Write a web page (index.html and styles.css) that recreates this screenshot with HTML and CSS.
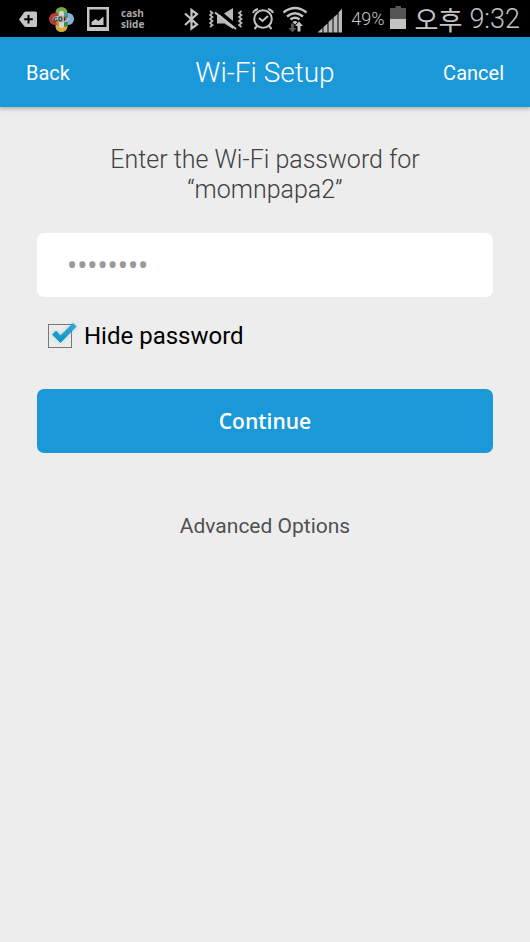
FILE: index.html
```html
<!DOCTYPE html>
<html lang="en">
<head>
<meta charset="utf-8">
<meta name="viewport" content="width=device-width, initial-scale=1">
<title>Wi-Fi Setup</title>
<link rel="stylesheet" href="styles.css">
</head>
<body>
<div class="status">
  <div class="status-group status-left">
    <svg width="18" height="37" viewBox="19 0 18 37" aria-hidden="true"><path fill="#c4c4c4" d="M19 19.500L24 12.500Q24.800 11.500 26 11.500H35.500Q37 11.500 37 13V25.500Q37 27 35.500 27H26Q24.800 27 24 26Z"/><path stroke="#000" stroke-width="2" d="M28.500 15v8.500M24.300 19.300h8.500"/></svg>
    <svg width="26" height="37" viewBox="51 0 26 37" aria-hidden="true">
      <path fill="#74a94b" d="M57.500 15V12.500a6 5.500 0 0 1 12 0V15L63.500 19Z"/>
      <path fill="#7fb5d6" d="M68 13h2.500a5.500 6 0 0 1 0 12H68L64 19Z"/>
      <path fill="#d8ad35" d="M57.500 24v2.500a6 5.500 0 0 0 12 0V24L63.500 19Z"/>
      <path fill="#b83a34" d="M59 13h-2.500a5.500 6 0 0 0 0 12H59L63 19Z"/>
      <path fill="#4199ba" d="M65 14l5-1v7h-5z"/><path fill="#3b8c50" d="M64 22h6v4l-5 1z"/><path fill="#c78c32" d="M58 22h5v5l-4-1z"/>
      <rect x="61" y="11" width="5" height="17" rx="2" fill="#d4d4cf"/>
      <ellipse cx="63" cy="19" rx="8.500" ry="3.500" fill="#b8b8b4"/>
      <path fill="none" stroke="#34383a" stroke-width="1.200" d="M59 17.500q-3 0-3 2t3 1.500v-1.500M61 17v4M61 17h2q2 2 0 4h-2M66.500 21v-4h3M66.500 19h2"/>
    </svg>
    <svg width="22" height="37" viewBox="88 0 22 37" aria-hidden="true"><path fill="#c4c4c4" fill-rule="evenodd" d="M88 7h22v24H88zM90.500 9.500v17.500h17V9.500z"/><path fill="#c4c4c4" d="M92.500 25v-3l4-3 3 2 5-4.500V25z"/></svg>
    <span class="cash"><span>cash</span><span>slide</span></span>
  </div>
  <div class="status-group status-right">
    <svg width="16" height="37" viewBox="184 0 16 37" aria-hidden="true"><path fill="none" stroke="#c4c4c4" stroke-width="2.200" d="M185 13.500L197 24.500L191.500 28.500V10L197 14L185 25"/></svg>
    <svg width="34" height="37" viewBox="210 0 34 37" aria-hidden="true"><path fill="#b8b8b8" d="M218 14.500h3l13 12V29l-8.500-5.500H218zM225 13.500l9-5.500v13z"/><path stroke="#000" stroke-width="2" d="M217 10.500l20 16"/><path stroke="#c4c4c4" stroke-width="2" d="M216 12.500l21 16.500"/><path fill="none" stroke="#b8b8b8" stroke-width="1.700" d="M211 11l2.500 2-2.500 2 2.500 2-2.500 2 2.500 2-2.500 2 2.500 2-2.500 2M242.500 11l-2.500 2 2.500 2-2.500 2 2.500 2-2.500 2 2.500 2-2.500 2 2.500 2"/></svg>
    <svg width="22" height="37" viewBox="251 0 22 37" aria-hidden="true"><g fill="none" stroke="#c4c4c4" stroke-width="2"><circle cx="262" cy="19" r="8.800"/><path d="M258 18l3.500 3 5.500-5M256 26l-2.500 3M268 26l2.500 3M252 13q1-3 5-4M272 13q-1-3-5-4"/></g></svg>
    <svg width="25" height="37" viewBox="284 0 25 37" aria-hidden="true"><g fill="none" stroke="#c4c4c4" stroke-width="2.500"><path d="M284.500 12.500Q296 3.500 307.500 12.500M288 16.500Q296 10 304 16.500M291.500 19.500Q296 16 300.500 19.500"/></g><path fill="#c4c4c4" d="M293.500 22q2.500-2 5 0L296 24.500zM300 21.500l4 4.500h-2.500v5.500h-3V26h-2.500z"/><path fill="#555" d="M292 23.500h3V28h2.500l-4 4.500-4-4.500h2.500z"/></svg>
    <svg width="25" height="37" viewBox="317 0 25 37" aria-hidden="true"><path fill="#b8b8b8" d="M317.500 32.500l5-4.500v4.500zM323.500 27l4-3.500v9h-4zM328.500 22l4-3.500v14h-4zM333.500 17.500l4-3.500v18.500h-4zM338.500 12.500l3.500-4v24h-3.500z"/></svg>
    <span class="battery">
      <span class="percent">49%</span>
      <svg width="16" height="37" viewBox="390 0 16 37" aria-hidden="true"><path fill="#555" d="M390 9h5.500V7h5.500v2h5v11h-16z"/><path fill="#c4c4c4" d="M390 20h16v10h-16z"/></svg>
    </span>
    <span class="clock"><span class="meridiem" lang="ko">오후</span><time>9:32</time></span>
  </div>
</div>
<header class="header">
  <button class="nav back" type="button">Back</button>
  <h1 class="title">Wi-Fi Setup</h1>
  <button class="nav cancel" type="button">Cancel</button>
</header>
<main>
  <form class="form">
    <label class="prompt" for="password">Enter the Wi-Fi password for<br>“momnpapa2”</label>
    <input class="password" id="password" type="password" value="password" autocomplete="off">
    <div class="hide">
      <span class="check">
        <input class="box" id="hide" type="checkbox" checked>
        <svg class="tick" width="30" height="28" viewBox="0 0 30 28" aria-hidden="true"><defs><linearGradient id="blue" x2="0" y2="1"><stop stop-color="#35a9d6"/><stop offset="1" stop-color="#0795c5"/></linearGradient></defs><path fill="url(#blue)" stroke="#2787ad" stroke-width=".7" d="M4.500 12.500L8 9l4.500 5L25 1.500l3 3L12.500 20.500z"/></svg>
      </span>
      <label for="hide">Hide password</label>
    </div>
    <button class="continue" type="button">Continue</button>
    <a class="advanced" href="#advanced">Advanced Options</a>
  </form>
</main>
</body>
</html>
```
FILE: styles.css
```css
* { box-sizing: border-box; }
body {
  margin: 0;
  min-height: 100vh;
  background: #ededed;
  color: #404040;
  font-family: Roboto, "Noto Sans CJK KR", sans-serif;
}
button, input { font: inherit; }
button { border: 0; cursor: pointer; }
svg { display: block; flex: none; }
.status {
  display: flex;
  justify-content: space-between;
  height: 37px;
  padding: 0 10px 0 19px;
  background: #000;
  color: #c4c4c4;
}
.status-group { display: flex; align-items: center; }
.status-left { gap: 12px; }
.status-right { gap: 9px; white-space: nowrap; }
.cash {
  display: grid;
  color: #aaa;
  font: 700 10px/11px "Open Sans", sans-serif;
}
.battery { display: flex; gap: 5px; }
.percent { font-size: 18px; font-weight: 300; line-height: 40px; }
.clock { display: flex; gap: 7px; font-size: 27px; font-weight: 300; line-height: 38px; }
.meridiem { font-family: "Noto Sans CJK KR", sans-serif; font-size: 26px; font-weight: 400; line-height: 37px; }
.header {
  position: relative;
  display: grid;
  grid-template-columns: 1fr auto 1fr;
  align-items: center;
  height: 70px;
  padding: 1px 26px 0;
  background: #1b98d8;
  box-shadow: 0 1px 4px 1px rgb(0 0 0 / 25%);
  color: #fff;
}
.nav { padding: 0; background: none; color: inherit; font-size: 20px; font-weight: 400; }
.back { justify-self: start; }
.cancel { justify-self: end; }
.title { margin: 0; font-size: 28px; font-weight: 350; }
.form {
  display: flex;
  flex-direction: column;
  padding: 38px 37px;
}
.prompt { font-size: 25px; font-weight: 350; line-height: 30px; text-align: center; }
.password {
  width: 100%;
  height: 64px;
  margin-top: 28px;
  padding: 0 30px 2px;
  border: 0;
  border-radius: 7px;
  outline: 0;
  background: #fff;
  color: #999;
  font-family: "Noto Sans", sans-serif;
  font-size: 27px;
}
.hide {
  display: flex;
  align-items: center;
  gap: 12px;
  height: 30px;
  margin: 24px 0 38px;
  padding-left: 11px;
  color: #000;
  font-size: 24px;
}
.check { position: relative; display: block; width: 24px; height: 24px; }
.box {
  appearance: none;
  display: block;
  width: 24px;
  height: 24px;
  margin: 0;
  border: 1px solid #777;
}
.tick {
  position: absolute;
  left: 0;
  top: -2px;
  visibility: hidden;
  pointer-events: none;
  filter: drop-shadow(0 0 2px rgb(80 195 235 / 60%));
}
.box:checked + .tick { visibility: visible; }
.continue {
  height: 64px;
  border-radius: 7px;
  background: #1b98d8;
  color: #fff;
  font-family: "Open Sans", sans-serif;
  font-size: 21px;
  font-weight: 600;
}
.advanced {
  align-self: center;
  margin-top: 58px;
  color: #505050;
  font-size: 21px;
  line-height: 30px;
  text-decoration: none;
}
```
